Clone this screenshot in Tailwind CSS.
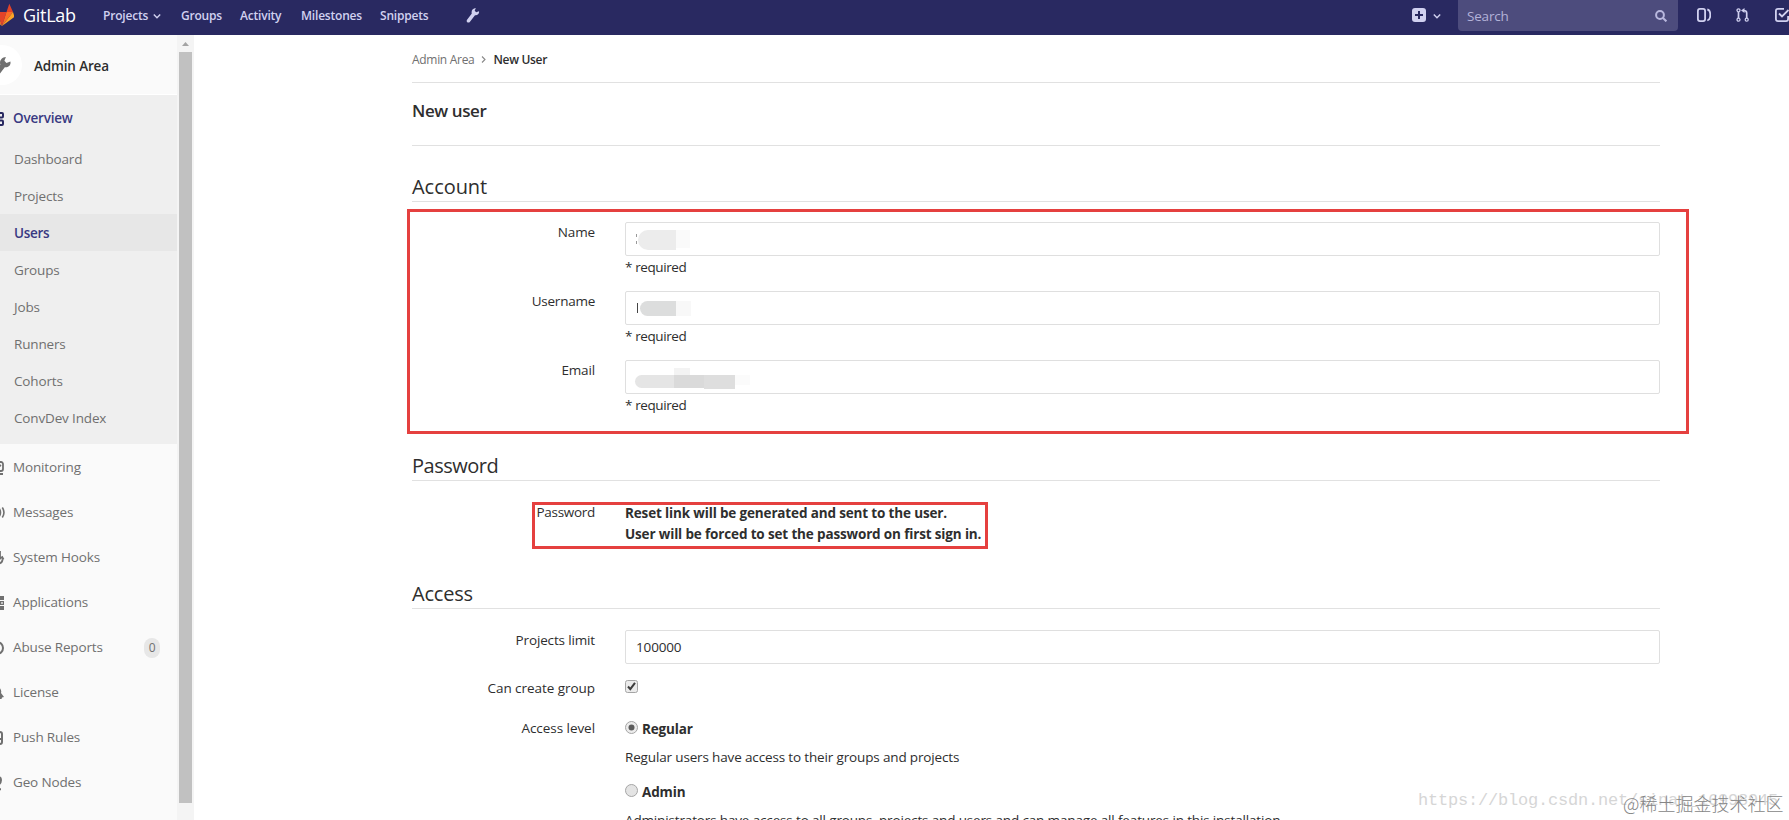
<!DOCTYPE html>
<html lang="en">
<head>
    <meta charset="UTF-8">
    <meta name="viewport" content="width=device-width, initial-scale=1.0">
    <title>New User · Admin Area · GitLab</title>
    <script src="https://cdn.jsdelivr.net/npm/@tailwindcss/browser@4"></script>
</head>
<body class="relative h-[820px] w-[1789px] overflow-hidden bg-white font-['Open_Sans',sans-serif] text-[13.5px] leading-[21px] tracking-[-0.15px] text-[#2e2e2e]">

    <!-- Navbar -->
    <header class="flex h-[35px] items-start overflow-hidden bg-[#292961] text-[12px] leading-[32px] font-semibold tracking-[-0.2px] text-[#d1d1f0]">
        <svg class="mt-[3px] -ml-[10px] h-6 w-6 shrink-0" viewBox="0 0 24 24">
            <path fill="#e24329" d="M12 23 16.5 9h-9z"/>
            <path fill="#fc6d26" d="M12 23 7.500 9H1zM12 23l4.500-14H23z"/>
            <path fill="#fca326" d="M1 9-.3 13.200a1 1 0 0 0 .3 1L12 23zM23 9l1.300 4.200a1 1 0 0 1-.3 1L12 23z"/>
            <path fill="#e24329" d="M1 9h6.500L4.700.800zM23 9h-6.500L19.300.800z"/>
        </svg>
        <span class="ml-[9px] w-[80px] text-[18px] leading-[31px] font-normal tracking-[-0.3px] text-white">GitLab</span>
        <a class="flex w-[78px] items-center">Projects
            <svg class="ml-[5px] h-2 w-2" viewBox="0 0 8 8" fill="none" stroke="#d1d1f0" stroke-width="1.400"><path d="M.8 2.500 4 5.700l3.200-3.200"/></svg>
        </a>
        <a class="w-[59px]">Groups</a>
        <a class="w-[61px]">Activity</a>
        <a class="w-[79px]">Milestones</a>
        <a class="w-[86px]">Snippets</a>
        <svg class="mt-2 h-[15px] w-[14px]" viewBox="0 0 14 15"><path fill="#d1d1f0" d="M9.800 0 8.700 2.700l1.500 1.600L13 3.200c.6 2.600-1.500 4.500-4 4.100L3.800 14c-1.300 1.500-3.900-.1-2.900-1.900L5.800 5.600C4.900 2.600 6.900.200 9.800 0z"/></svg>
        <div class="ml-auto flex">
            <svg class="mt-2 h-[14px] w-[14px]" viewBox="0 0 14 14"><rect width="14" height="14" rx="3" fill="#d1d1f0"/><path d="M7 3v8M3 7h8" stroke="#292961" stroke-width="2"/></svg>
            <svg class="mt-3 ml-[7px] h-2 w-2" viewBox="0 0 8 8" fill="none" stroke="#d1d1f0" stroke-width="1.400"><path d="M.8 2.500 4 5.700l3.200-3.200"/></svg>
            <div class="ml-[17px] flex h-[31px] w-[220px] items-center justify-between rounded-b-[4px] bg-[#4d4c7d] pr-[11px] pl-[9px] text-[13.5px] font-normal text-[#b3b2d8]">
                <span>Search</span>
                <svg class="h-3 w-3" viewBox="0 0 12 12" fill="none" stroke="#b9b8de" stroke-width="2"><circle cx="5" cy="5" r="3.900"/><path d="m8 8 3.400 3.400"/></svg>
            </div>
            <svg class="mt-2 ml-[19px] h-[14px] w-[14px]" viewBox="0 0 14 14" fill="none" stroke="#d1d1f0" stroke-width="1.800"><rect x=".9" y=".9" width="7.200" height="12.200" rx="2"/><path d="M10.300 1.500c2.800.5 3 2.400 3 5.500s-.6 4.900-3 5.500"/></svg>
            <svg class="mt-2 ml-[25px] h-[14px] w-[13px]" viewBox="0 0 13 14" fill="none" stroke="#d1d1f0" stroke-width="1.300"><circle cx="2.500" cy="2.300" r="1.500"/><circle cx="2.500" cy="11.700" r="1.500"/><circle cx="10.700" cy="11.700" r="1.500"/><path stroke-width="1.700" d="M2.500 4v6M10.700 10V5q0-2.500-3-2.500"/><path fill="#d1d1f0" stroke="none" d="M8.500 0v5L5 2.500z"/></svg>
            <svg class="mt-2 ml-[26px] h-[14px] w-[14px]" viewBox="0 0 14 14" fill="none" stroke="#d1d1f0" stroke-width="1.800"><path d="M9 .9H3Q.9.900.9 3v8q0 2.100 2.100 2.100h8q2.100 0 2.100-2.100V8M4 5.500l3 3L13.500 2"/></svg>
        </div>
    </header>

    <div class="flex h-[785px]">
        <!-- Sidebar -->
        <aside class="w-[177px] shrink-0 overflow-hidden bg-[#fafafa] text-[#707070]">
            <div class="flex h-[60px] items-center border-b border-white text-[#2e2e2e]">
                <div class="-ml-[18px] flex h-10 w-10 shrink-0 items-center justify-center rounded-full bg-white">
                    <svg class="mt-[6px] h-[21px] w-[20px]" viewBox="0 0 14 15"><path fill="#707070" d="M9.800 0 8.700 2.700l1.500 1.600L13 3.200c.6 2.600-1.500 4.500-4 4.100L3.800 14c-1.300 1.500-3.900-.1-2.900-1.900L5.800 5.600C4.900 2.600 6.900.200 9.800 0z"/></svg>
                </div>
                <span class="ml-3 pt-1 font-semibold tracking-[-0.15px]">Admin Area</span>
            </div>
            <div class="h-[349px] bg-[#efefef]">
                <div class="flex h-[45px] items-center pt-[2px] font-semibold tracking-[-0.2px] text-[#393982]">
                    <svg class="h-4 w-[13px]" viewBox="0 0 13 16" fill="none" stroke="#292961" stroke-width="2"><rect x="-3" y="2" width="6" height="4.500" rx="1"/><rect x="-3" y="9.500" width="6" height="4.500" rx="1"/></svg>
                    <span>Overview</span>
                </div>
                <a class="flex h-[37px] items-center pt-[2px] pl-[14px]">Dashboard</a>
                <a class="flex h-[37px] items-center pt-[2px] pl-[14px]">Projects</a>
                <a class="flex h-[37px] items-center bg-[#e7e7e7] pt-[2px] pl-[14px] font-semibold tracking-[-0.3px] text-[#393982]">Users</a>
                <a class="flex h-[37px] items-center pt-[2px] pl-[14px]">Groups</a>
                <a class="flex h-[37px] items-center pt-[2px] pl-[14px]">Jobs</a>
                <a class="flex h-[37px] items-center pt-[2px] pl-[14px]">Runners</a>
                <a class="flex h-[37px] items-center pt-[2px] pl-[14px]">Cohorts</a>
                <a class="flex h-[37px] items-center pt-[2px] pl-[14px]">ConvDev Index</a>
            </div>
            <a class="flex h-[45px] items-center pt-[2px]">
                <svg class="h-4 w-[13px]" viewBox="0 0 13 16" fill="none" stroke="#707070" stroke-width="1.800"><rect x="-9" y="2" width="12" height="9" rx="2"/><path d="M-3 14h6M-1 6.500l2-1.500"/></svg>
                <span>Monitoring</span>
            </a>
            <a class="flex h-[45px] items-center pt-[2px]">
                <svg class="h-4 w-[13px]" viewBox="0 0 13 16" fill="none" stroke="#707070" stroke-width="1.600"><path d="M-.5 4q2 3.500 0 7M2.300 2.500q3.300 5 0 10"/></svg>
                <span>Messages</span>
            </a>
            <a class="flex h-[45px] items-center pt-[2px]">
                <svg class="h-4 w-[13px]" viewBox="0 0 13 16" fill="none" stroke="#707070" stroke-width="1.800"><path d="M0 1v7M-3 13.700q5.500 0 5.500-4.500M-.5 9l2.700-2 1.300 2.500"/></svg>
                <span>System Hooks</span>
            </a>
            <a class="flex h-[45px] items-center pt-[2px]">
                <svg class="h-4 w-[13px]" viewBox="0 0 13 16" fill="#707070"><path d="M0 1h4v4H0zM0 11h4v4H0z"/><path d="M.6 6.600h2.800v2.800H.6z" fill="none" stroke="#707070" stroke-width="1.200"/></svg>
                <span>Applications</span>
            </a>
            <a class="flex h-[45px] items-center pt-[2px]">
                <svg class="h-4 w-[13px]" viewBox="0 0 13 16" fill="none" stroke="#707070" stroke-width="2"><circle cx="-3" cy="8" r="6"/></svg>
                <span>Abuse Reports</span>
                <span class="mr-[17px] ml-auto flex h-5 w-4 items-center justify-center rounded-full bg-[#e7e7e7] text-[12px]">0</span>
            </a>
            <a class="flex h-[45px] items-center pt-[2px]">
                <svg class="h-4 w-[13px]" viewBox="0 0 13 16" fill="#707070"><path d="M-1 2q3 3 2 6l3 4-2 .5-.5 1.500L-3 14z"/></svg>
                <span>License</span>
            </a>
            <a class="flex h-[45px] items-center pt-[2px]">
                <svg class="h-4 w-[13px]" viewBox="0 0 13 16" fill="none" stroke="#707070" stroke-width="2"><rect x="-8" y="2" width="10" height="12" rx="2"/><path d="M-2 9h4"/></svg>
                <span>Push Rules</span>
            </a>
            <a class="flex h-[45px] items-center pt-[2px]">
                <svg class="h-4 w-[13px]" viewBox="0 0 13 16" fill="none" stroke="#707070" stroke-width="2"><path d="M-4 2.500q5-1.500 5 2.500 0 3-3 5M-2 14.300h3"/></svg>
                <span>Geo Nodes</span>
            </a>
        </aside>

        <!-- Sidebar scrollbar -->
        <div class="flex w-[17px] shrink-0 flex-col bg-[#f4f4f4] pl-[2px]">
            <svg class="h-[17px] w-[13px]" viewBox="0 0 13 17"><path fill="#a3a3a3" d="M3 11h7L6.500 7z"/></svg>
            <div class="h-[751px] w-[13px] bg-[#c1c1c1]"></div>
        </div>

        <!-- Content -->
        <main class="ml-[218px] w-[1248px]">
            <nav class="flex h-[48px] items-center border-b border-[#e1e1e1] pt-[2px] text-[12px] tracking-[-0.3px] text-[#707070]">
                <span>Admin Area</span>
                <svg class="mx-[7px] h-[7px] w-[5px]" viewBox="0 0 5 7" fill="none" stroke="#888" stroke-width="1.100"><path d="m1 .5 3 3-3 3"/></svg>
                <span class="font-semibold text-[#2e2e2e]">New User</span>
            </nav>
            <h3 class="flex h-[63px] items-center border-b border-[#e1e1e1] pb-[8px] text-[17px] font-semibold tracking-[-0.4px]">New user</h3>

            <section class="relative">
                <h4 class="flex h-[56px] w-full items-end border-b border-[#e1e1e1] pb-[2px] text-[20px] leading-6 tracking-[-0.05px]">Account</h4>
                <div class="absolute top-[63px] -left-[5px] h-[225px] w-[1282px] border-3 border-[#e5403f]"></div>
                <div class="mt-[20px] flex h-[69px]">
                    <label class="w-[183px] text-right">Name</label>
                    <div class="ml-[30px] w-[1035px]">
                        <div class="flex h-[34px] items-center rounded-[2px] border border-[#dfdfdf] pl-[10px]">
                            <span class="mr-[1px] h-[10px] w-px border-y-3 border-[#999]"></span>
                            <span class="mt-[2px] h-5 w-[38px] rounded-l-full bg-[#ececec]"></span>
                            <span class="h-[18px] w-[14px] bg-[#fafafa]"></span>
                        </div>
                        <p class="pt-[1px] tracking-[-0.4px]">* required</p>
                    </div>
                </div>
                <div class="flex h-[69px]">
                    <label class="w-[183px] text-right tracking-[-0.25px]">Username</label>
                    <div class="ml-[30px] w-[1035px]">
                        <div class="flex h-[34px] items-center rounded-[2px] border border-[#dfdfdf] pl-[11px]">
                            <span class="mr-[2px] h-[10px] w-px bg-[#444]"></span>
                            <span class="h-[15px] w-[36px] rounded-l-full bg-[#dcdddd]"></span>
                            <span class="h-[15px] w-[15px] bg-[#f8f8f8]"></span>
                        </div>
                        <p class="pt-[1px] tracking-[-0.4px]">* required</p>
                    </div>
                </div>
                <div class="flex h-[69px]">
                    <label class="w-[183px] text-right">Email</label>
                    <div class="ml-[30px] w-[1035px]">
                        <div class="flex h-[34px] items-start rounded-[2px] border border-[#dfdfdf] pl-[9px]">
                            <span class="mt-[14px] h-[13px] w-[39px] rounded-l-full bg-[#e5e5e5]"></span>
                            <span class="mt-[7px] h-[20px] w-[16px] border-t-7 border-[#f3f3f3] bg-[#dadada]"></span>
                            <span class="mt-[14px] h-[13px] w-[14px] bg-[#dadada]"></span>
                            <span class="mt-[14px] h-[14px] w-[31px] bg-[#dedede]"></span>
                            <span class="mt-[14px] h-[10px] w-[15px] bg-[#fbfbfb]"></span>
                        </div>
                        <p class="pt-[1px] tracking-[-0.4px]">* required</p>
                    </div>
                </div>
            </section>

            <section class="relative">
                <h4 class="flex h-[52px] w-full items-end border-b border-[#e1e1e1] pb-[2px] text-[20px] leading-6 tracking-[-0.5px]">Password</h4>
                <div class="absolute top-[73px] left-[120px] h-[47px] w-[456px] border-3 border-[#e5403f]"></div>
                <div class="flex h-[76px] pt-[21px]">
                    <label class="w-[183px] text-right tracking-[-0.3px]">Password</label>
                    <strong class="ml-[30px] pt-[1px] tracking-[-0.15px]">Reset link will be generated and sent to the user.<br>User will be forced to set the password on first sign in.</strong>
                </div>
            </section>

            <section>
                <h4 class="flex h-[52px] w-full items-end border-b border-[#e1e1e1] pb-[2px] text-[20px] leading-6 tracking-[-0.2px]">Access</h4>
                <div class="flex h-[69px] pt-[21px]">
                    <label class="w-[183px] text-right">Projects limit</label>
                    <div class="ml-[30px] flex h-[34px] w-[1035px] items-center rounded-[2px] border border-[#dfdfdf] pl-[10px]">100000</div>
                </div>
                <div class="flex h-[40px]">
                    <label class="w-[183px] text-right tracking-[-0.05px]">Can create group</label>
                    <svg class="mt-[2px] ml-[30px] h-[13px] w-[13px]" viewBox="0 0 13 13"><rect x=".5" y=".5" width="12" height="12" rx="2" fill="#ebebeb" stroke="#a5a5a5"/><path d="m3 6.500 2.300 2.700L10 2.800" fill="none" stroke="#3d3d3d" stroke-width="2"/></svg>
                </div>
                <div class="flex">
                    <label class="w-[183px] text-right tracking-[-0.05px]">Access level</label>
                    <div class="ml-[30px]">
                        <div class="flex items-start">
                            <svg class="mt-[3px] h-[13px] w-[13px]" viewBox="0 0 13 13"><circle cx="6.500" cy="6.500" r="6" fill="#ececec" stroke="#a5a5a5"/><circle cx="6.500" cy="6.500" r="3" fill="#5c5c5c"/></svg>
                            <strong class="ml-1 pt-[1px]">Regular</strong>
                        </div>
                        <p class="pt-[7px]">Regular users have access to their groups and projects</p>
                        <div class="flex items-start pt-[13px]">
                            <svg class="mt-[3px] h-[13px] w-[13px]" viewBox="0 0 13 13"><circle cx="6.500" cy="6.500" r="6" fill="#e4e4e4" stroke="#a5a5a5"/></svg>
                            <strong class="ml-1 pt-[1px]">Admin</strong>
                        </div>
                        <p class="pt-[7px] whitespace-nowrap">Administrators have access to all groups, projects and users and can manage all features in this installation</p>
                    </div>
                </div>
            </section>
        </main>
    </div>

    <!-- Watermarks -->
    <div class="absolute top-[789px] left-[1418px] font-['Liberation_Mono','Noto_Sans_CJK_SC',monospace] text-[17px] leading-6 tracking-[-0.2px] whitespace-nowrap text-[#d6d6d6]">https://blog.csdn.net/sinat_16998945</div>
    <div class="absolute top-[791px] left-[1623px] font-['Noto_Sans_CJK_SC',sans-serif] text-[18px] leading-6 font-light tracking-normal whitespace-nowrap text-[#858585]">@稀土掘金技术社区</div>
</body>
</html>
